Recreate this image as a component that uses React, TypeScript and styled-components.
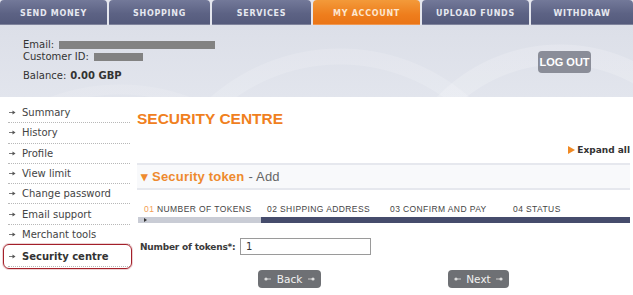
import React from "react";
import styled, { createGlobalStyle } from "styled-components";

const Global = createGlobalStyle`
  html, body {
    margin: 0;
    padding: 0;
    background: #fff;
    font-family: "DejaVu Sans", Verdana, sans-serif;
  }
`;

const Page = styled.div`
  width: 633px;
  height: 295px;
  overflow: hidden;
  background: #fff;
`;

const Tabs = styled.nav`
  display: grid;
  grid-template-columns: 107px 101px 99px 107px 107px 102px;
  column-gap: 2px;
  height: 25px;
  background: #e4e6ee;
`;

const Tab = styled.div<{ $active?: boolean }>`
  display: flex;
  align-items: center;
  justify-content: center;
  border-radius: 4px 4px 0 0;
  background: ${(p) =>
    p.$active
      ? "linear-gradient(#f39a3a, #ee7d1c 60%, #ea7416)"
      : "linear-gradient(#737999, #5c6284 55%, #545a7b)"};
  color: ${(p) => (p.$active ? "#fde6cf" : "#e6e8f0")};
  font-size: 8px;
  font-weight: bold;
  letter-spacing: 0.7px;
  padding-top: 1px;
  box-shadow: inset 0 -1px 0 rgba(255, 255, 255, 0.25);
`;

const Header = styled.header`
  display: flex;
  justify-content: space-between;
  height: 72px;
  padding: 14px 42px 0 23px;
  box-sizing: border-box;
  background:
    radial-gradient(circle at 560px 190px, transparent 150px, rgba(255,255,255,0.18) 151px, rgba(255,255,255,0.18) 170px, transparent 171px),
    radial-gradient(circle at 340px 220px, transparent 180px, rgba(255,255,255,0.15) 181px, rgba(255,255,255,0.15) 196px, transparent 197px),
    radial-gradient(circle at 120px 260px, transparent 190px, rgba(255,255,255,0.12) 191px, rgba(255,255,255,0.12) 200px, transparent 201px),
    linear-gradient(#dcdfe8, #e2e5ed);
`;

const Account = styled.div`
  display: flex;
  flex-direction: column;
  font-size: 10px;
  color: #333;
  line-height: 12px;
`;

const Line = styled.div<{ $gap?: number }>`
  display: flex;
  align-items: center;
  margin-top: ${(p) => p.$gap ?? 0}px;

  b {
    margin-left: 4px;
  }
`;

const Redacted = styled.span<{ $w: number }>`
  display: inline-block;
  width: ${(p) => p.$w}px;
  height: 8px;
  margin-left: 5px;
  background: #828282;
`;

const LogOut = styled.button`
  align-self: flex-start;
  margin-top: 12px;
  width: 53px;
  height: 22px;
  border: none;
  border-radius: 4px;
  background: #8a8d98;
  color: #fff;
  font-family: "Liberation Sans Narrow", "Liberation Sans", sans-serif;
  font-weight: bold;
  font-size: 11px;
  padding: 0;
`;

const Body = styled.div`
  display: grid;
  grid-template-columns: 130px 1fr;
  column-gap: 7px;
  padding-right: 3px;
`;

const Side = styled.ul`
  list-style: none;
  margin: 0;
  padding: 6px 0 0 8px;
`;

const SideItem = styled.li<{ $active?: boolean }>`
  position: relative;
  display: flex;
  align-items: center;
  gap: 6px;
  height: 20.3px;
  box-sizing: border-box;
  padding-left: 1px;
  border-bottom: 1px dotted #b8b8b8;
  font-size: 10px;
  color: #444;
  font-weight: ${(p) => (p.$active ? "bold" : "normal")};
  ${(p) => p.$active && "color: #333; height: 21px; margin-top: 1px;"}

  &::before {
    content: "";
    display: ${(p) => (p.$active ? "block" : "none")};
    position: absolute;
    left: -5px;
    right: -2px;
    top: -2px;
    bottom: -3px;
    border: 1px solid #a3202a;
    border-radius: 6px;
    box-shadow: 0 0 0 1px rgba(163, 32, 42, 0.2);
  }
`;

const Arrow = () => (
  <svg width="7" height="5" viewBox="0 0 7 5">
    <path d="M0 2.5h4" stroke="#777" strokeWidth="1" />
    <path d="M3.5 0.5L6.5 2.5L3.5 4.5z" fill="#555" />
  </svg>
);

const Main = styled.main`
  display: flex;
  flex-direction: column;
  padding-top: 14px;
`;

const Title = styled.h1`
  margin: 0;
  font-family: "Liberation Sans", Arial, sans-serif;
  font-size: 15.5px;
  line-height: 16px;
  color: #f0801e;
  font-weight: bold;
`;

const ExpandRow = styled.div`
  display: flex;
  justify-content: flex-end;
  align-items: center;
  gap: 2px;
  margin-top: 17px;
  height: 12px;
  font-size: 9px;
  font-weight: bold;
  color: #333;
`;

const Section = styled.div`
  display: flex;
  align-items: center;
  gap: 4px;
  margin-top: 7px;
  height: 27px;
  box-sizing: border-box;
  padding-left: 4px;
  border-top: 2px solid #e6e8ee;
  border-bottom: 2px solid #e6e8ee;
  background: #f8f9fb;
  font-family: "Liberation Sans", Arial, sans-serif;
  font-size: 13px;
  color: #666;
  letter-spacing: 0.2px;

  b {
    color: #ee8a2e;
  }
`;

const Steps = styled.div`
  display: grid;
  grid-template-columns: repeat(4, 123px);
  margin-top: 14px;
  margin-left: 1px;
`;

const Step = styled.div`
  display: flex;
  flex-direction: column;
`;

const StepLabel = styled.div`
  height: 12px;
  padding-left: 6px;
  font-family: "Liberation Sans", Arial, sans-serif;
  font-size: 8.5px;
  letter-spacing: 0.4px;
  color: #444;
  white-space: nowrap;

  span {
    color: #f2a054;
  }
`;

const StepBar = styled.div<{ $done?: boolean }>`
  display: flex;
  align-items: center;
  height: 6px;
  margin-top: 1px;
  padding-left: 6px;
  background: ${(p) => (p.$done ? "#c9ccd5" : "#464c6c")};
`;

const Form = styled.div`
  display: flex;
  align-items: center;
  margin-top: 15px;
  padding-left: 3px;
`;

const Label = styled.label`
  width: 100px;
  white-space: nowrap;
  font-size: 9px;
  letter-spacing: -0.2px;
  font-weight: bold;
  color: #3a3a3a;
`;

const Input = styled.input`
  width: 131px;
  height: 17px;
  box-sizing: border-box;
  border: 1px solid #9a9a9a;
  padding: 0 5px;
  font-size: 10px;
  font-family: "DejaVu Sans", sans-serif;
  color: #333;
`;

const Buttons = styled.div`
  display: flex;
  gap: 127px;
  margin-top: 15px;
  padding-left: 121px;
`;

const NavButton = styled.button<{ $w: number }>`
  display: flex;
  align-items: center;
  justify-content: space-between;
  width: ${(p) => p.$w}px;
  height: 18px;
  padding: 0 6px;
  border: none;
  border-radius: 4px;
  background: #6e7074;
  color: #f2f2f2;
  font-family: "DejaVu Sans", sans-serif;
  font-size: 10.5px;
`;

const Dot = ({ flip }: { flip?: boolean }) => (
  <svg width="7" height="4" viewBox="0 0 7 4" style={flip ? { transform: "scaleX(-1)" } : undefined}>
    <circle cx="5" cy="2" r="1.6" fill="#ddd" />
    <path d="M0 2h4" stroke="#ccc" strokeWidth="1" />
  </svg>
);

const menu = [
  "Summary",
  "History",
  "Profile",
  "View limit",
  "Change password",
  "Email support",
  "Merchant tools",
  "Security centre",
];

const steps = ["NUMBER OF TOKENS", "SHIPPING ADDRESS", "CONFIRM AND PAY", "STATUS"];

export default function App() {
  return (
    <Page>
      <Global />
      <Tabs>
        <Tab>SEND MONEY</Tab>
        <Tab>SHOPPING</Tab>
        <Tab>SERVICES</Tab>
        <Tab $active>MY ACCOUNT</Tab>
        <Tab>UPLOAD FUNDS</Tab>
        <Tab>WITHDRAW</Tab>
      </Tabs>
      <Header>
        <Account>
          <Line>
            Email:<Redacted $w={156} />
          </Line>
          <Line>
            Customer ID:<Redacted $w={49} />
          </Line>
          <Line $gap={7}>
            Balance:<b>0.00 GBP</b>
          </Line>
        </Account>
        <LogOut>LOG OUT</LogOut>
      </Header>
      <Body>
        <Side>
          {menu.map((m) => (
            <SideItem key={m} $active={m === "Security centre"}>
              <Arrow />
              {m}
            </SideItem>
          ))}
        </Side>
        <Main>
          <Title>SECURITY CENTRE</Title>
          <ExpandRow>
            <svg width="7" height="8" viewBox="0 0 7 8">
              <path d="M0 0L7 4L0 8z" fill="#f08a24" />
            </svg>
            Expand all
          </ExpandRow>
          <Section>
            <b>▾ Security token</b> - Add
          </Section>
          <Steps>
            {steps.map((s, i) => (
              <Step key={s}>
                <StepLabel>
                  {i === 0 ? <span>0{i + 1}</span> : `0${i + 1}`} {s}
                </StepLabel>
                <StepBar $done={i === 0}>
                  {i === 0 && (
                    <svg width="3" height="4" viewBox="0 0 3 4">
                      <path d="M0 0L3 2L0 4z" fill="#333" />
                    </svg>
                  )}
                </StepBar>
              </Step>
            ))}
          </Steps>
          <Form>
            <Label>Number of tokens*:</Label>
            <Input defaultValue="1" />
          </Form>
          <Buttons>
            <NavButton $w={63}>
              <Dot flip />
              Back
              <Dot />
            </NavButton>
            <NavButton $w={61}>
              <Dot flip />
              Next
              <Dot />
            </NavButton>
          </Buttons>
        </Main>
      </Body>
    </Page>
  );
}
